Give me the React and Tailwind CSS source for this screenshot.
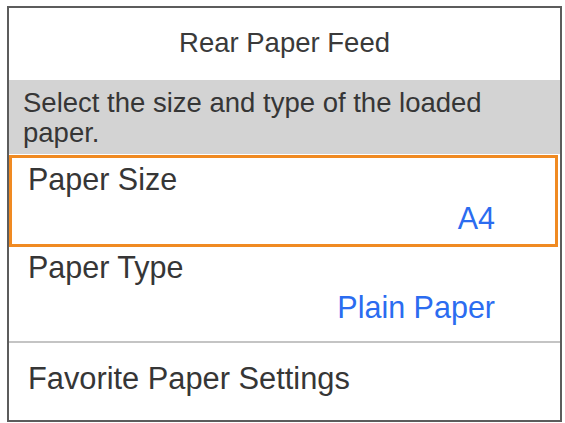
import React from "react";

const font = { fontFamily: '"Liberation Sans", Arial, sans-serif' };

const App = () => {
  return (
    <div className="w-[565px] h-[423px] bg-white overflow-hidden" style={font}>
      <div className="ml-[7px] mt-[6px] w-[555px] h-[416px] border-2 border-[#5c5c5c] flex flex-col">
        {/* Header */}
        <div className="h-[72px] flex items-center justify-center pb-[3px] text-[27.5px] text-[#3a3a3a]">
          Rear Paper Feed
        </div>

        {/* Instruction */}
        <div className="bg-[#d3d3d3] pl-[14px] pr-[10px] pt-[8px] pb-[6px] text-[27.5px] leading-[30px] text-[#363636]">
          Select the size and type of the loaded paper.
        </div>

        {/* Paper Size (selected) */}
        <div className="mt-px mr-[2px] border-[3px] border-[#f08a22] pl-[16px] pr-[60px] pt-[5px] pb-[10px] text-[30.5px] leading-[32px]">
          <div className="text-[#363636]">Paper Size</div>
          <div className="mt-[7px] text-right text-[#2b6cf0]">A4</div>
        </div>

        {/* Paper Type */}
        <div className="pl-[19px] pr-[65px] pt-[4px] pb-[18px] text-[30.5px] leading-[32px] border-b-2 border-[#c4c4c4]">
          <div className="text-[#363636]">Paper Type</div>
          <div className="mt-[8px] text-right text-[#2b6cf0]">Plain Paper</div>
        </div>

        {/* Favorite */}
        <div className="pl-[19px] pt-[20px] text-[30.8px] leading-[32px] text-[#363636]">
          Favorite Paper Settings
        </div>
      </div>
    </div>
  );
};

export default App;
